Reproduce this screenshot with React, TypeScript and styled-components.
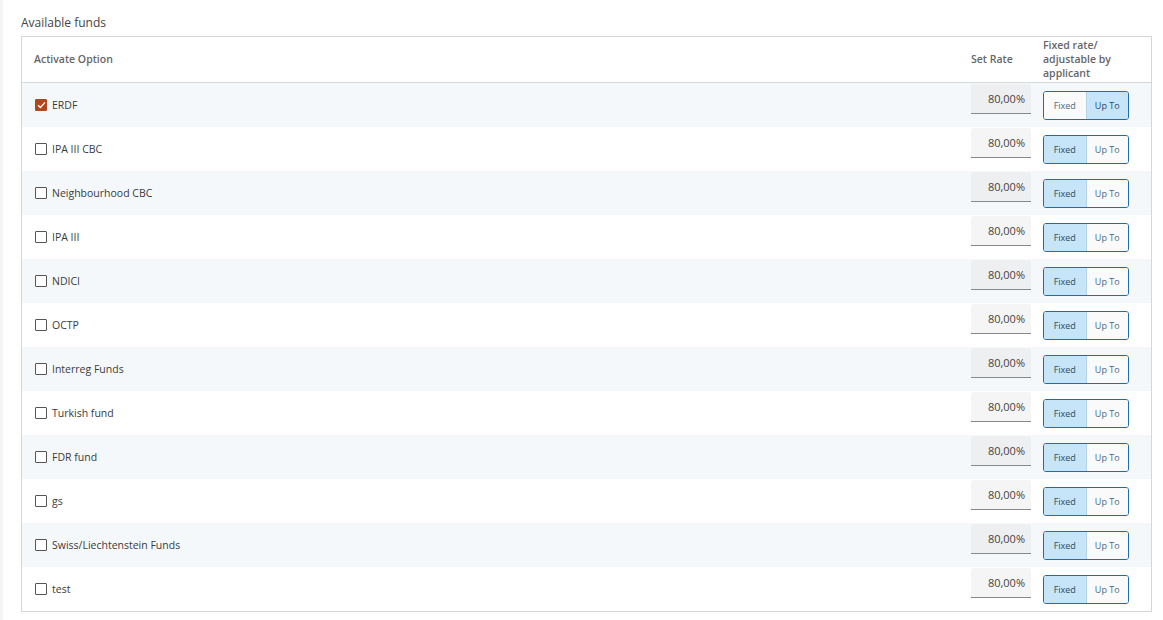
import React, { useState } from "react";
import styled, { createGlobalStyle } from "styled-components";

const GlobalStyle = createGlobalStyle`
  html, body {
    margin: 0;
    padding: 0;
    background: #ffffff;
    font-family: "Open Sans", "Noto Sans", sans-serif;
  }
`;

const Page = styled.div`
  padding: 14px 11px 0 18px;
  border-left: 3px solid #f4f4f4;
  min-height: 620px;
  box-sizing: border-box;
`;

const Title = styled.div`
  font-size: 12px;
  color: #444;
  line-height: 18px;
  margin-bottom: 4px;
`;

const Table = styled.div`
  border: 1px solid #d3d8dc;
  width: 1131px;
  box-sizing: border-box;
`;

const Grid = styled.div<{ striped?: boolean; header?: boolean }>`
  display: grid;
  grid-template-columns: 1fr 72px 108px;
  align-items: center;
  background: ${(p) => (p.striped ? "#f5f8fa" : "#ffffff")};
  height: ${(p) => (p.header ? "45px" : "44px")};
  border-bottom: ${(p) => (p.header ? "1px solid #d3d8dc" : "none")};
`;

const HeadCell = styled.div`
  font-size: 10.5px;
  font-weight: 600;
  color: #666;
  line-height: 14px;
  margin-top: -2px;
`;

const FirstHead = styled(HeadCell)`
  padding-left: 12px;
`;

const Option = styled.label`
  display: flex;
  align-items: center;
  gap: 5px;
  padding-left: 13px;
  font-size: 10.5px;
  color: #3a3a3a;
  cursor: pointer;
`;

const Box = styled.span<{ checked: boolean }>`
  width: 12px;
  height: 12px;
  box-sizing: border-box;
  border: 1px solid ${(p) => (p.checked ? "#b2451b" : "#555")};
  background: ${(p) => (p.checked ? "#b2451b" : "#fff")};
  border-radius: 1px;
  display: flex;
  align-items: center;
  justify-content: center;
`;

const RateInput = styled.div<{ striped?: boolean }>`
  align-self: start;
  width: 60px;
  height: 30px;
  margin-top: 1px;
  box-sizing: border-box;
  background: ${(p) => (p.striped ? "#edeff1" : "#f5f5f5")};
  border-bottom: 1px solid #888;
  border-radius: 3px 3px 0 0;
  font-size: 11px;
  line-height: 15px;
  color: #444;
  text-align: right;
  padding: 7px 6px 0 0;
`;

const Toggle = styled.div`
  display: flex;
  width: 86px;
  height: 29px;
  box-sizing: border-box;
  border: 1px solid #1b6db3;
  border-radius: 3px;
  overflow: hidden;
`;

const ToggleHalf = styled.button<{ active: boolean }>`
  flex: 1;
  border: none;
  margin: 0;
  padding: 0;
  font-family: inherit;
  font-size: 9px;
  color: ${(p) => (p.active ? "#2a4a66" : "#4a6a88")};
  background: ${(p) => (p.active ? "#c7e5f9" : "#fafafa")};
  cursor: pointer;
  & + & {
    border-left: 1px solid #b9d3e6;
  }
`;

const funds = [
  "ERDF",
  "IPA III CBC",
  "Neighbourhood CBC",
  "IPA III",
  "NDICI",
  "OCTP",
  "Interreg Funds",
  "Turkish fund",
  "FDR fund",
  "gs",
  "Swiss/Liechtenstein Funds",
  "test",
];

const Check = () => (
  <svg width="9" height="8" viewBox="0 0 9 8">
    <path d="M1 4.2 L3.4 6.4 L8 1.4" stroke="#fff" strokeWidth="1.4" fill="none" />
  </svg>
);

export default function App() {
  const [checked, setChecked] = useState<boolean[]>(funds.map((_, i) => i === 0));
  const [modes, setModes] = useState<string[]>(funds.map((_, i) => (i === 0 ? "upto" : "fixed")));

  const toggleCheck = (i: number) =>
    setChecked(checked.map((c, j) => (j === i ? !c : c)));

  const setMode = (i: number, m: string) =>
    setModes(modes.map((x, j) => (j === i ? m : x)));

  return (
    <>
      <GlobalStyle />
      <Page>
        <Title>Available funds</Title>
        <Table>
          <Grid header>
            <FirstHead>Activate Option</FirstHead>
            <HeadCell>Set Rate</HeadCell>
            <HeadCell>
              Fixed rate/
              <br />
              adjustable by
              <br />
              applicant
            </HeadCell>
          </Grid>
          {funds.map((f, i) => {
            const striped = i % 2 === 0;
            return (
              <Grid key={f} striped={striped}>
                <Option onClick={() => toggleCheck(i)}>
                  <Box checked={checked[i]}>{checked[i] && <Check />}</Box>
                  {f}
                </Option>
                <RateInput striped={striped}>80,00%</RateInput>
                <Toggle>
                  <ToggleHalf active={modes[i] === "fixed"} onClick={() => setMode(i, "fixed")}>
                    Fixed
                  </ToggleHalf>
                  <ToggleHalf active={modes[i] === "upto"} onClick={() => setMode(i, "upto")}>
                    Up To
                  </ToggleHalf>
                </Toggle>
              </Grid>
            );
          })}
        </Table>
      </Page>
    </>
  );
}
